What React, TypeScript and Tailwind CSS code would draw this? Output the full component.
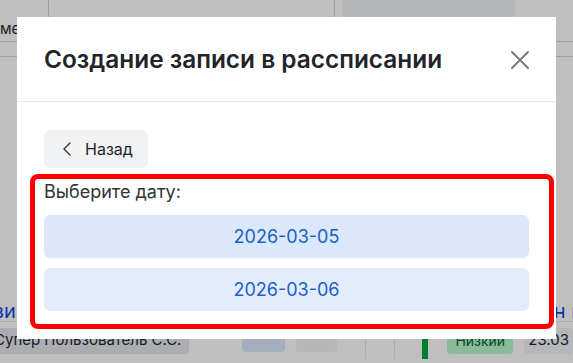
import React from "react";

export default function App() {
  const font = { fontFamily: "Inter, 'Noto Sans', sans-serif" };
  return (
    <div className="relative w-[573px] h-[363px] overflow-hidden bg-white" style={font}>
      {/* background page */}
      <div className="flex flex-col w-full h-full">
        <div className="flex items-start h-[42px] border-b border-gray-300">
          <div className="w-[48px] pt-[18px] text-[15px] text-gray-800 whitespace-nowrap pl-0">ме</div>
          <div className="w-[287px] h-[40px] -mt-[20px] rounded-md border border-gray-300 bg-white"></div>
          <div className="w-[173px] h-[40px] -mt-[20px] ml-[7px] rounded-md bg-gray-100"></div>
        </div>
        <div className="h-[15px] border-b border-gray-300"></div>
        <div className="flex-1"></div>
        <div className="flex items-end h-[40px] justify-between">
          <div className="text-[20px] leading-[20px] text-blue-700 -ml-[6px]">зи</div>
          <div className="text-[20px] leading-[20px] text-blue-700 mr-[-10px]">н п</div>
        </div>
        <div className="flex items-center h-[38px] border-t border-gray-200">
          <div className="bg-gray-200 rounded px-1 h-[26px] flex items-center text-[15px] text-gray-800 -ml-[10px] w-[205px] whitespace-nowrap">Супер Пользователь С.С.</div>
          <div className="ml-[53px] w-[44px] h-[22px] rounded bg-blue-100"></div>
          <div className="ml-[11px] w-[42px] h-[22px] rounded bg-gray-100"></div>
          <div className="ml-[28px] w-px h-full bg-gray-200"></div>
          <div className="ml-[28px] w-px h-full bg-gray-200"></div>
          <div className="ml-[27px] w-[7px] h-full bg-green-600"></div>
          <div className="ml-[19px] w-[68px] h-[26px] rounded bg-green-200 text-[14px] text-green-800 flex items-center justify-center">Низкий</div>
          <div className="ml-[11px] px-1 h-[26px] rounded bg-gray-100 text-[15px] text-gray-800 flex items-center">23.03</div>
        </div>
        <div className="h-[4px]"></div>
      </div>

      {/* overlay */}
      <div className="absolute inset-0 bg-black/25"></div>

      {/* modal */}
      <div className="absolute left-[17px] top-[17px] w-[539px] h-[322px] bg-white flex flex-col">
        <div className="flex items-center justify-between h-[85px] pl-[27px] pr-[25px] border-b border-gray-200">
          <h2 className="text-[24.4px] font-semibold text-[#212529]">Создание записи в рассписании</h2>
          <svg width="22" height="22" viewBox="0 0 22 22" className="mt-[1px]">
            <path d="M3 3 L19 19 M19 3 L3 19" stroke="#777" strokeWidth="1.8" strokeLinecap="round" fill="none" />
          </svg>
        </div>
        <div className="flex flex-col items-start px-[27px] pt-[28px]">
          <button className="flex items-center gap-[14px] h-[38px] pl-[19px] pr-[15px] rounded-md bg-[#f1f2f4] text-[16px] text-[#212529]">
            <svg width="8" height="14" viewBox="0 0 8 14">
              <path d="M7 1 L1 7 L7 13" stroke="#333" strokeWidth="1.4" fill="none" strokeLinecap="round" strokeLinejoin="round" />
            </svg>
            <span>Назад</span>
          </button>
          <div className="mt-[6px] ml-[-14px] mr-[-25px] self-stretch border-[5px] border-[#ff0000] rounded-[8px] pl-[9px] pr-[20px] pt-[1px] pb-[13px]">
            <div className="text-[18px] leading-[24px] text-[#333]">Выберите дату:</div>
            <div className="mt-[11px] flex flex-col gap-[10px]">
              <div className="h-[43px] rounded-md bg-[#dbe7fa] flex items-center justify-center text-[18px] text-[#1a5fc4]">2026-03-05</div>
              <div className="h-[43px] rounded-md bg-[#e3ecfb] flex items-center justify-center text-[18px] text-[#1a5fc4]">2026-03-06</div>
            </div>
          </div>
        </div>
      </div>
    </div>
  );
}
